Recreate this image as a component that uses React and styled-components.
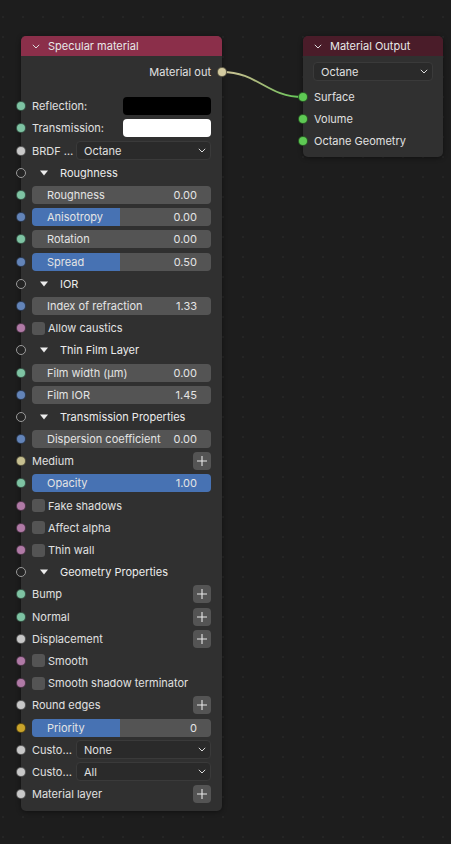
import React from "react";
import styled, { createGlobalStyle } from "styled-components";

const GlobalStyle = createGlobalStyle`
  html, body {
    margin: 0;
    padding: 0;
    background: #1d1d1d;
  }
  body {
    font-family: "Inter", "DejaVu Sans", sans-serif;
    font-size: 11px;
    color: #e0e0e0;
  }
`;

const SOCKET = {
  teal: "#7ec3a3",
  blue: "#6384b8",
  grey: "#c8c8c8",
  pink: "#b07aa6",
  beige: "#c6bf90",
  out: "#d4cba0",
  gold: "#caa42b",
  green: "#5ec954",
};

const specularRows = [
  { type: "swatch", label: "Reflection:", socket: "teal", color: "#000000" },
  { type: "swatch", label: "Transmission:", socket: "teal", color: "#ffffff" },
  { type: "select", label: "BRDF …", socket: "grey", value: "Octane" },
  { type: "panel", label: "Roughness" },
  { type: "field", label: "Roughness", socket: "teal", value: "0.00", fill: 0 },
  { type: "field", label: "Anisotropy", socket: "blue", value: "0.00", fill: 49 },
  { type: "field", label: "Rotation", socket: "teal", value: "0.00", fill: 0 },
  { type: "field", label: "Spread", socket: "blue", value: "0.50", fill: 49 },
  { type: "panel", label: "IOR" },
  { type: "field", label: "Index of refraction", socket: "blue", value: "1.33", fill: 0 },
  { type: "check", label: "Allow caustics", socket: "pink" },
  { type: "panel", label: "Thin Film Layer" },
  { type: "field", label: "Film width (µm)", socket: "teal", value: "0.00", fill: 0 },
  { type: "field", label: "Film IOR", socket: "blue", value: "1.45", fill: 0 },
  { type: "panel", label: "Transmission Properties" },
  { type: "field", label: "Dispersion coefficient", socket: "blue", value: "0.00", fill: 0 },
  { type: "plus", label: "Medium", socket: "beige" },
  { type: "field", label: "Opacity", socket: "teal", value: "1.00", fill: 100 },
  { type: "check", label: "Fake shadows", socket: "pink" },
  { type: "check", label: "Affect alpha", socket: "pink" },
  { type: "check", label: "Thin wall", socket: "pink" },
  { type: "panel", label: "Geometry Properties" },
  { type: "plus", label: "Bump", socket: "teal" },
  { type: "plus", label: "Normal", socket: "teal" },
  { type: "plus", label: "Displacement", socket: "grey" },
  { type: "check", label: "Smooth", socket: "pink" },
  { type: "check", label: "Smooth shadow terminator", socket: "pink" },
  { type: "plus", label: "Round edges", socket: "grey" },
  { type: "field", label: "Priority", socket: "gold", value: "0", fill: 49 },
  { type: "select", label: "Custo…", socket: "grey", value: "None" },
  { type: "select", label: "Custo…", socket: "grey", value: "All" },
  { type: "plus", label: "Material layer", socket: "grey" },
];

function Chevron() {
  return (
    <svg width="8" height="5" viewBox="0 0 8 5">
      <path d="M0.8 0.8 L4 4 L7.2 0.8" fill="none" stroke="#dcdcdc" strokeWidth="1" />
    </svg>
  );
}

function Triangle() {
  return (
    <svg width="8" height="6" viewBox="0 0 8 6">
      <path d="M0 0.5 L8 0.5 L4 5.5 Z" fill="#ececec" />
    </svg>
  );
}

function PlusIcon() {
  return (
    <svg width="10" height="10" viewBox="0 0 10 10">
      <path d="M5 0 V10 M0 5 H10" stroke="#e8e8e8" strokeWidth="1.1" />
    </svg>
  );
}

function SelectBox({ value, $width }) {
  return (
    <Dropdown $width={$width}>
      <span>{value}</span>
      <Chevron />
    </Dropdown>
  );
}

function SpecRow({ row }) {
  if (row.type === "panel") {
    return (
      <Row>
        <Socket $hollow />
        <PanelTitle>
          <Triangle />
          <span>{row.label}</span>
        </PanelTitle>
      </Row>
    );
  }

  let content = null;
  if (row.type === "swatch") {
    content = (
      <>
        <Label>{row.label}</Label>
        <Swatch $color={row.color} />
      </>
    );
  } else if (row.type === "select") {
    content = (
      <>
        <Label>{row.label}</Label>
        <SelectBox value={row.value} $width={135} />
      </>
    );
  } else if (row.type === "field") {
    content = (
      <Field $fill={row.fill}>
        <span>{row.label}</span>
        <span>{row.value}</span>
      </Field>
    );
  } else if (row.type === "check") {
    content = (
      <>
        <Checkbox />
        <CheckLabel>{row.label}</CheckLabel>
      </>
    );
  } else if (row.type === "plus") {
    content = (
      <>
        <Label>{row.label}</Label>
        <PlusButton>
          <PlusIcon />
        </PlusButton>
      </>
    );
  }

  return (
    <Row>
      <Socket $color={SOCKET[row.socket]} />
      {content}
    </Row>
  );
}

function App() {
  return (
    <>
      <GlobalStyle />
      <Canvas>
        <Links width="451" height="844">
          <defs>
            <linearGradient id="link" x1="222" y1="0" x2="303" y2="0" gradientUnits="userSpaceOnUse">
              <stop offset="0" stopColor="#cfc59a" />
              <stop offset="0.45" stopColor="#a9b97a" />
              <stop offset="1" stopColor="#5ec954" />
            </linearGradient>
          </defs>
          <path d="M222 72 C258 72 267 97 303 97" fill="none" stroke="url(#link)" strokeWidth="2" />
        </Links>

        <Node $x={21} $y={36} $width={201}>
          <Header $color="#8b2f4a">
            <Chevron />
            <span>Specular material</span>
          </Header>
          <Body $pad="5px 0 6px">
            <Row $end $mb={12}>
              <Label>Material out</Label>
              <Socket $right $color={SOCKET.out} />
            </Row>
            {specularRows.map((row, i) => (
              <SpecRow key={i} row={row} />
            ))}
          </Body>
        </Node>

        <Node $x={303} $y={36} $width={140}>
          <Header $color="#4a1c29">
            <Chevron />
            <span>Material Output</span>
          </Header>
          <Body $pad="6px 0 4px">
            <SelectRow>
              <SelectBox value="Octane" />
            </SelectRow>
            <Row $mt={5}>
              <Socket $color={SOCKET.green} />
              <Label>Surface</Label>
            </Row>
            <Row>
              <Socket $color={SOCKET.green} />
              <Label>Volume</Label>
            </Row>
            <Row>
              <Socket $color={SOCKET.green} />
              <Label>Octane Geometry</Label>
            </Row>
          </Body>
        </Node>
      </Canvas>
    </>
  );
}

const Canvas = styled.div`
  position: relative;
  width: 451px;
  height: 844px;
  overflow: hidden;
  background-color: #1d1d1d;
  background-image: radial-gradient(circle, #252525 0.9px, transparent 1.3px);
  background-size: 20px 20px;
  background-position: -7px 7px;
`;

const Links = styled.svg`
  position: absolute;
  inset: 0;
  pointer-events: none;
`;

const Node = styled.div`
  position: absolute;
  left: ${(p) => p.$x}px;
  top: ${(p) => p.$y}px;
  width: ${(p) => p.$width}px;
  background: #303030;
  border-radius: 5px;
  box-shadow: 0 1px 5px rgba(0, 0, 0, 0.45);
`;

const Header = styled.div`
  height: 20px;
  display: flex;
  align-items: center;
  gap: 8px;
  padding-left: 11px;
  background: ${(p) => p.$color};
  border-radius: 5px 5px 0 0;
  color: #e8e8e8;
  font-size: 11px;
  white-space: nowrap;
`;

const Body = styled.div`
  display: flex;
  flex-direction: column;
  padding: ${(p) => p.$pad};
`;

const Row = styled.div`
  position: relative;
  height: 22.2px;
  flex-shrink: 0;
  display: flex;
  align-items: center;
  justify-content: ${(p) => (p.$end ? "flex-end" : "flex-start")};
  padding: 0 11px;
  margin-top: ${(p) => p.$mt || 0}px;
  margin-bottom: ${(p) => p.$mb || 0}px;
`;

const SelectRow = styled.div`
  display: flex;
  padding: 0 10px;
`;

const Socket = styled.span`
  position: absolute;
  top: 50%;
  ${(p) => (p.$right ? "right: -5px;" : "left: -5px;")}
  width: 10px;
  height: 10px;
  box-sizing: border-box;
  border-radius: 50%;
  transform: translateY(-50%);
  background: ${(p) => (p.$hollow ? "#242424" : p.$color)};
  border: 1px solid ${(p) => (p.$hollow ? "#9a9a9a" : "rgba(0, 0, 0, 0.55)")};
`;

const Label = styled.span`
  color: #e0e0e0;
  white-space: nowrap;
`;

const CheckLabel = styled(Label)`
  margin-left: 3px;
`;

const PanelTitle = styled.div`
  display: flex;
  align-items: center;
  gap: 12px;
  padding-left: 8px;
  color: #ececec;
  white-space: nowrap;
`;

const Swatch = styled.div`
  margin-left: auto;
  width: 88px;
  height: 18px;
  border-radius: 4px;
  background: ${(p) => p.$color};
`;

const Dropdown = styled.div`
  margin-left: auto;
  ${(p) => (p.$width ? `width: ${p.$width}px;` : "flex: 1;")}
  height: 19px;
  box-sizing: border-box;
  display: flex;
  align-items: center;
  justify-content: space-between;
  padding: 0 4px 0 7px;
  background: #2a2a2a;
  border: 1px solid #3a3a3a;
  border-radius: 4px;
  color: #e0e0e0;
`;

const Field = styled.div`
  flex: 1;
  height: 18px;
  display: flex;
  align-items: center;
  justify-content: space-between;
  padding: 0 14px 0 15px;
  border-radius: 4px;
  color: #e4e4e4;
  white-space: nowrap;
  background: linear-gradient(
    to right,
    #4772b3 ${(p) => p.$fill}%,
    #545454 ${(p) => p.$fill}%
  );
`;

const Checkbox = styled.span`
  width: 13px;
  height: 13px;
  border-radius: 3px;
  background: #545454;
  flex-shrink: 0;
`;

const PlusButton = styled.div`
  margin-left: auto;
  width: 18px;
  height: 18px;
  border-radius: 4px;
  background: #545454;
  display: flex;
  align-items: center;
  justify-content: center;
`;

export default App;
